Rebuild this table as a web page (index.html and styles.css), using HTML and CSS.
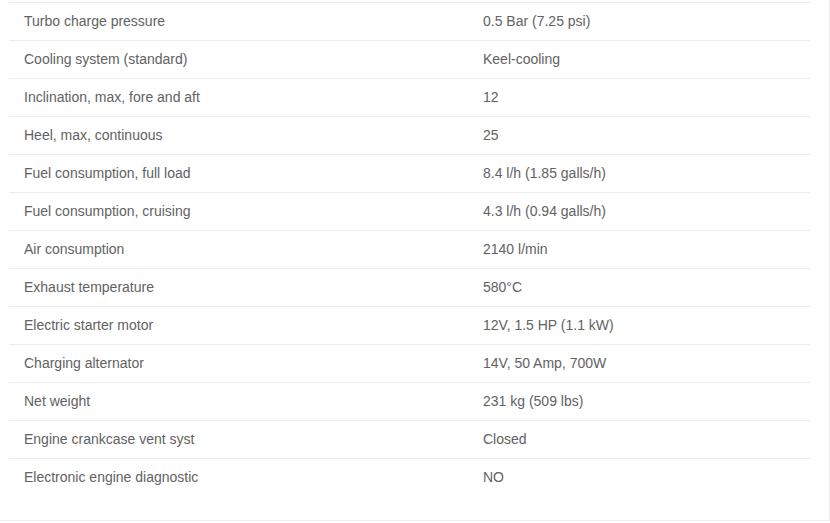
FILE: index.html
```html
<!DOCTYPE html>
<html>
<head>
<meta charset="utf-8">
<link rel="stylesheet" href="styles.css">
</head>
<body>
<div class="panel">
  <table class="specs">
    <tbody>
      <tr><td>Turbo charge pressure</td><td>0.5 Bar (7.25 psi)</td></tr>
      <tr><td>Cooling system (standard)</td><td>Keel-cooling</td></tr>
      <tr><td>Inclination, max, fore and aft</td><td>12</td></tr>
      <tr><td>Heel, max, continuous</td><td>25</td></tr>
      <tr><td>Fuel consumption, full load</td><td>8.4 l/h (1.85 galls/h)</td></tr>
      <tr><td>Fuel consumption, cruising</td><td>4.3 l/h (0.94 galls/h)</td></tr>
      <tr><td>Air consumption</td><td>2140 l/min</td></tr>
      <tr><td>Exhaust temperature</td><td>580°C</td></tr>
      <tr><td>Electric starter motor</td><td>12V, 1.5 HP (1.1 kW)</td></tr>
      <tr><td>Charging alternator</td><td>14V, 50 Amp, 700W</td></tr>
      <tr><td>Net weight</td><td>231 kg (509 lbs)</td></tr>
      <tr><td>Engine crankcase vent syst</td><td>Closed</td></tr>
      <tr><td>Electronic engine diagnostic</td><td>NO</td></tr>
    </tbody>
  </table>
</div>
</body>
</html>
```

FILE: styles.css
```css
html, body {
  margin: 0;
  padding: 0;
  background: #fff;
}
.panel {
  width: 802px;
  padding: 2px 18px 24px 9px;
  border-right: 1px solid #ececec;
  border-bottom: 1px solid #ececec;
}
.specs {
  width: 802px;
  border-collapse: collapse;
  font-family: "Liberation Sans", Arial, sans-serif;
  font-size: 14px;
  color: #626262;
}
.specs tr {
  border-top: 1px solid #ececec;
}
.specs td {
  height: 35px;
  padding: 0 15px 2px;
  vertical-align: middle;
}
.specs td:first-child {
  width: 429px;
}
```
